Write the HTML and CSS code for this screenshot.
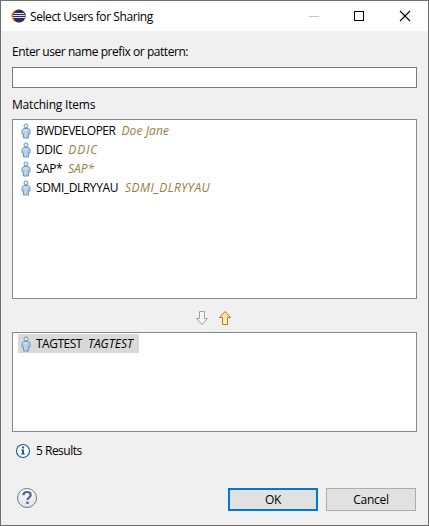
FILE: index.html
```
<!DOCTYPE html>
<html lang="en">
<head>
<meta charset="utf-8">
<title>Select Users for Sharing</title>
<link rel="stylesheet" href="styles.css">
</head>
<body>
<svg width="0" height="0" class="defs" aria-hidden="true">
  <defs>
    <linearGradient id="body" x1="0" x2="1" y1="0" y2="1"><stop offset="0" stop-color="#d9e9f5"/><stop offset="1" stop-color="#9fc0dc"/></linearGradient>
    <linearGradient id="gold" x1="0" x2="0" y1="0" y2="1"><stop offset="0" stop-color="#ffe08a"/><stop offset="1" stop-color="#fff8dc"/></linearGradient>
    <linearGradient id="help" x1="0" x2="0" y1="0" y2="1"><stop offset="0" stop-color="#fdfdfe"/><stop offset="1" stop-color="#dfe2e8"/></linearGradient>
    <symbol id="user" viewBox="0 0 10 16">
      <path d="M3 5.500h4l2 1.500v4H7.500v4h-5v-4H1V7z" fill="url(#body)" stroke="#6f96bd" stroke-linejoin="round"/>
      <path d="M3 8v3M7 8v3" stroke="#89abcd" stroke-width=".6"/>
      <circle cx="5" cy="2.900" r="2" fill="#dceaf5" stroke="#7399bd"/>
    </symbol>
  </defs>
</svg>
<div class="window">
  <header class="titlebar">
    <svg class="logo" width="15" height="14" viewBox="0 0 15 14">
      <circle cx="6.800" cy="7" r="6.500" fill="#f39a32"/>
      <circle cx="8.200" cy="7" r="6.500" fill="#30275c"/>
      <path d="M3 4.500h10M2 6.500h12M2 8.500h12" stroke="#e4e2f0" stroke-width="1"/>
    </svg>
    <h1 class="title">Select Users for Sharing</h1>
    <svg class="controls" width="104" height="12" viewBox="0 0 104 12">
      <path d="M0 6.500h10" stroke="#c6c6c6"/>
      <rect x="45.500" y="1.500" width="9" height="9" fill="none" stroke="#000"/>
      <path d="M91 1l10 10M101 1l-10 10" stroke="#000" stroke-width="1.100"/>
    </svg>
  </header>
  <main class="content">
    <label class="label prompt" for="pattern"><span>Enter user name prefix or pattern:</span></label>
    <input class="field" id="pattern" type="text">
    <div class="label matching"><span>Matching Items</span></div>
    <ul class="list results">
      <li class="row"><svg class="user"><use href="#user"/></svg><span class="name">BWDEVELOPER</span><em class="full-name">Doe Jane</em></li>
      <li class="row"><svg class="user"><use href="#user"/></svg><span class="name">DDIC</span><em class="wide">DDIC</em></li>
      <li class="row"><svg class="user"><use href="#user"/></svg><span class="name">SAP*</span><em class="short">SAP*</em></li>
      <li class="row"><svg class="user"><use href="#user"/></svg><span class="name long">SDMI_DLRYYAU</span><em class="long-id">SDMI_DLRYYAU</em></li>
    </ul>
    <div class="movers">
      <svg width="14" height="16" viewBox="0 0 14 16"><path d="M4.500 1.500h5v7h3L7 14.500 1.500 8.500h3z" fill="#f6f6f6" stroke="#a3a3a3"/></svg>
      <svg width="14" height="16" viewBox="0 0 14 16"><path d="M4.500 14.500h5v-7h3L7 1.500 1.500 7.500h3z" fill="url(#gold)" stroke="#b87b0b"/></svg>
    </div>
    <ul class="list chosen">
      <li class="row selected"><svg class="user"><use href="#user"/></svg><span class="name">TAGTEST</span><em class="short">TAGTEST</em></li>
    </ul>
    <div class="status">
      <svg width="16" height="16" viewBox="0 0 16 16"><circle cx="8" cy="8" r="6.500" fill="#fff" stroke="#165a96" stroke-width="1.100"/><path d="M7 3.500h2v2H7zM6 6.500h3v4h1v1H6v-1h1v-3H6z" fill="#12609f"/></svg>
      <span>5 Results</span>
    </div>
    <footer class="footer">
      <svg width="22" height="22" viewBox="0 0 22 22"><circle cx="11" cy="11" r="9.500" fill="url(#help)" stroke="#667796"/><path d="M7.400 8.200C7.500 5.900 9 5 11 5c2.200 0 3.700 1.200 3.700 3 0 2.500-3.200 2.500-3.200 5" fill="none" stroke="#50648a" stroke-width="2.200"/><path d="M10.200 14.600h2.500v2.300h-2.500z" fill="#50648a"/></svg>
      <button class="button ok"><span>OK</span></button>
      <button class="button cancel"><span>Cancel</span></button>
    </footer>
  </main>
</div>
</body>
</html>
```
FILE: styles.css
```
* { box-sizing: border-box; }
body { margin: 0; font: 12px/19px "Open Sans", "Noto Sans", sans-serif; color: #000; }
.defs { position: absolute; }
.window { display: flex; flex-direction: column; width: 429px; height: 526px; border: 1px solid #6d6d6d; background: #f0f0f0; }
.titlebar { display: flex; align-items: center; height: 30px; padding: 0 15px 0 10px; background: #fff; }
.logo { margin-top: -1px; }
.title { margin: 0 0 0 4px; font-size: 12px; font-weight: 400; letter-spacing: -0.42px; }
.controls { flex: none; margin: -1px 0 0 auto; }
.content { display: flex; flex: 1; flex-direction: column; padding: 11px 11px 0; }
.label { height: 19px; white-space: nowrap; letter-spacing: -0.45px; }
.field { width: 405px; height: 21px; margin: 6px 0 0; padding: 0 4px; border: 1px solid #7a7a7a; border-radius: 0; background: #fff; font: inherit; outline: 0; }
.matching { margin-top: 7px; letter-spacing: -0.2px; }
.list { width: 405px; margin: 0; padding: 1px 5px; border: 1px solid #828790; background: #fff; list-style: none; }
.results { height: 180px; margin-top: 5px; }
.row { display: flex; align-items: center; width: max-content; height: 19px; padding-left: 3px; white-space: nowrap; letter-spacing: -0.5px; }
.user { flex: none; width: 10px; height: 16px; margin-right: 5px; }
.name { margin-right: 6px; }
.name.long { margin-right: 7px; letter-spacing: -0.4px; }
.row em { color: #94803d; }
.full-name { letter-spacing: 0.1px; }
.wide { letter-spacing: 0.9px; }
.short { letter-spacing: 0; }
.long-id { letter-spacing: 0.45px; }
.movers { display: flex; justify-content: center; gap: 9px; height: 33px; padding: 11px 2px 0 0; }
.chosen { height: 100px; }
.selected { width: 121px; background: #d9d9d9; }
.row.selected em { color: #000; }
.status { display: flex; align-items: center; gap: 5px; height: 19px; margin: 9px 0 0 3px; letter-spacing: -0.5px; }
.footer { display: flex; align-items: center; height: 23px; margin-top: 28px; padding: 0 1px 0 4px; }
.footer svg { margin-top: -3px; }
.button { width: 90px; height: 23px; padding: 0; border: 1px solid #adadad; background: #e1e1e1; color: #000; font: inherit; line-height: 19px; letter-spacing: -0.3px; }
.ok { margin: 0 8px 0 auto; border: 2px solid #0078d7; }
```
